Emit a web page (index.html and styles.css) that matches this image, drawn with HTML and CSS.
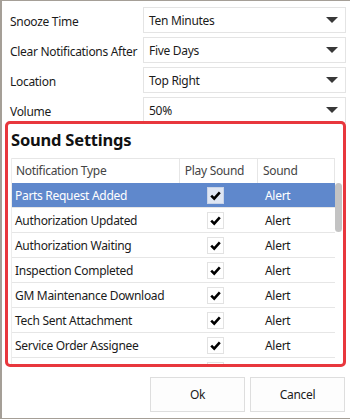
FILE: index.html
```html
<!DOCTYPE html>
<html>
<head>
<meta charset="utf-8">
<link rel="stylesheet" href="styles.css">
</head>
<body>
<div class="window">
  <div class="form">
    <label class="lbl">Snooze Time</label>
    <div class="combo"><span>Ten Minutes</span><i class="arrow"></i></div>
    <label class="lbl">Clear Notifications After</label>
    <div class="combo"><span>Five Days</span><i class="arrow"></i></div>
    <label class="lbl">Location</label>
    <div class="combo"><span>Top Right</span><i class="arrow"></i></div>
    <label class="lbl">Volume</label>
    <div class="combo"><span>50%</span><i class="arrow"></i></div>
  </div>

  <section class="sound">
    <h2 class="title">Sound Settings</h2>
    <div class="grid">
      <div class="table">
        <div class="row head">
          <div class="c1">Notification Type</div>
          <div class="c2">Play Sound</div>
          <div class="c3">Sound</div>
        </div>
        <div class="row sel">
          <div class="c1">Parts Request Added</div>
          <div class="c2"><span class="cb"><svg viewBox="0 0 15 15"><path d="M3.2 7.6 L6.2 10.6 L11.8 4.4"/></svg></span></div>
          <div class="c3">Alert</div>
        </div>
        <div class="row">
          <div class="c1">Authorization Updated</div>
          <div class="c2"><span class="cb"><svg viewBox="0 0 15 15"><path d="M3.2 7.6 L6.2 10.6 L11.8 4.4"/></svg></span></div>
          <div class="c3">Alert</div>
        </div>
        <div class="row">
          <div class="c1">Authorization Waiting</div>
          <div class="c2"><span class="cb"><svg viewBox="0 0 15 15"><path d="M3.2 7.6 L6.2 10.6 L11.8 4.4"/></svg></span></div>
          <div class="c3">Alert</div>
        </div>
        <div class="row">
          <div class="c1">Inspection Completed</div>
          <div class="c2"><span class="cb"><svg viewBox="0 0 15 15"><path d="M3.2 7.6 L6.2 10.6 L11.8 4.4"/></svg></span></div>
          <div class="c3">Alert</div>
        </div>
        <div class="row">
          <div class="c1">GM Maintenance Download</div>
          <div class="c2"><span class="cb"><svg viewBox="0 0 15 15"><path d="M3.2 7.6 L6.2 10.6 L11.8 4.4"/></svg></span></div>
          <div class="c3">Alert</div>
        </div>
        <div class="row">
          <div class="c1">Tech Sent Attachment</div>
          <div class="c2"><span class="cb"><svg viewBox="0 0 15 15"><path d="M3.2 7.6 L6.2 10.6 L11.8 4.4"/></svg></span></div>
          <div class="c3">Alert</div>
        </div>
        <div class="row">
          <div class="c1">Service Order Assignee</div>
          <div class="c2"><span class="cb"><svg viewBox="0 0 15 15"><path d="M3.2 7.6 L6.2 10.6 L11.8 4.4"/></svg></span></div>
          <div class="c3">Alert</div>
        </div>
        <div class="row last">
          <div class="c1">Work Order Note</div>
          <div class="c2"><span class="cb"><svg viewBox="0 0 15 15"><path d="M3.2 7.6 L6.2 10.6 L11.8 4.4"/></svg></span></div>
          <div class="c3">Alert</div>
        </div>
      </div>
      <div class="scroll"><div class="thumb"></div></div>
    </div>
  </section>

  <div class="buttons">
    <button class="btn">Ok</button>
    <button class="btn">Cancel</button>
  </div>
</div>
</body>
</html>
```

FILE: styles.css
```css
html, body {
  margin: 0;
  padding: 0;
  background: #ffffff;
}
body {
  width: 350px;
  height: 420px;
  overflow: hidden;
  font-family: "Noto Sans", "Open Sans", sans-serif;
  font-size: 12px;
  letter-spacing: -0.3px;
  color: #1b1b1b;
}
.window {
  box-sizing: border-box;
  height: 419px;
  border-left: 2px solid #a59f97;
  border-top: 1px solid #a59f97;
  border-bottom: 1px solid #a59f97;
  padding: 6px 4px 0 3px;
  display: flex;
  flex-direction: column;
}
.form {
  display: grid;
  grid-template-columns: 138px 203px;
  grid-auto-rows: 26px;
  row-gap: 4px;
}
.lbl {
  padding-left: 5px;
  display: flex;
  align-items: center;
  padding-top: 2px;
  white-space: nowrap;
}
.combo {
  box-sizing: border-box;
  border: 1px solid #e4e4e4;
  background: #fff;
  display: flex;
  align-items: center;
  justify-content: space-between;
  padding: 0 7px 0 5px;
}
.arrow {
  width: 0;
  height: 0;
  border-left: 6px solid transparent;
  border-right: 6px solid transparent;
  border-top: 6px solid #383838;
}
.sound {
  position: relative;
  z-index: 2;
  margin-top: -2px;
  height: 246px;
  box-sizing: border-box;
  border: 3px solid #e8373d;
  border-radius: 5px;
  overflow: hidden;
  padding: 0 2px 0 3px;
}
.title {
  margin: 0;
  height: 34px;
  font-size: 16.5px;
  font-weight: 700;
  line-height: 31px;
  letter-spacing: -0.2px;
  color: #111;
}
.grid {
  display: flex;
  border-left: 1px solid #ececec;
}
.table {
  width: 323px;
}
.row {
  display: grid;
  grid-template-columns: 168px 78px 77px;
  height: 25px;
  box-sizing: border-box;
  border-bottom: 1px solid #e6e6e6;
  align-items: center;
}
.row > div {
  padding-left: 3px;
  white-space: nowrap;
}
.head {
  border-top: 1px solid #e6e6e6;
  color: #444;
  height: 25px;
  border-bottom: none;
}
.head > div {
  height: 24px;
  line-height: 24px;
  border-right: 1px solid #e6e6e6;
  padding-left: 4px;
}
.head .c2 {
  padding-left: 5px;
}
.row .c2 {
  display: flex;
  justify-content: center;
  padding-left: 0;
  padding-right: 8px;
}
.row .c3 {
  padding-left: 7px;
}
.head .c3 {
  padding-left: 5px;
}
.last {
  align-items: start;
  padding-top: 4px;
}
.sel {
  background: #5f88cc;
  color: #fff;
}
.cb {
  width: 17px;
  height: 17px;
  box-sizing: border-box;
  border: 1px solid #e2e2e2;
  background: #fff;
  display: flex;
  align-items: center;
  justify-content: center;
}
.sel .cb {
  background: #dfe6f3;
  border-color: #c9d4e8;
}
.cb svg {
  width: 15px;
  height: 15px;
}
.cb path {
  fill: none;
  stroke: #000;
  stroke-width: 2.6;
  stroke-linecap: butt;
  stroke-linejoin: miter;
}
.scroll {
  width: 9px;
  padding-top: 25px;
  display: flex;
  justify-content: center;
}
.thumb {
  width: 7px;
  height: 49px;
  border-radius: 4px;
  background: #c3c3c3;
}
.buttons {
  display: flex;
  justify-content: flex-end;
  gap: 5px;
  margin-top: 10px;
  padding-right: 1px;
}
.btn {
  width: 95px;
  height: 35px;
  box-sizing: border-box;
  border: 1px solid #dedede;
  background: #fdfdfd;
  font-family: inherit;
  font-size: 12px;
  letter-spacing: -0.3px;
  color: #1b1b1b;
  padding: 0;
}
```
